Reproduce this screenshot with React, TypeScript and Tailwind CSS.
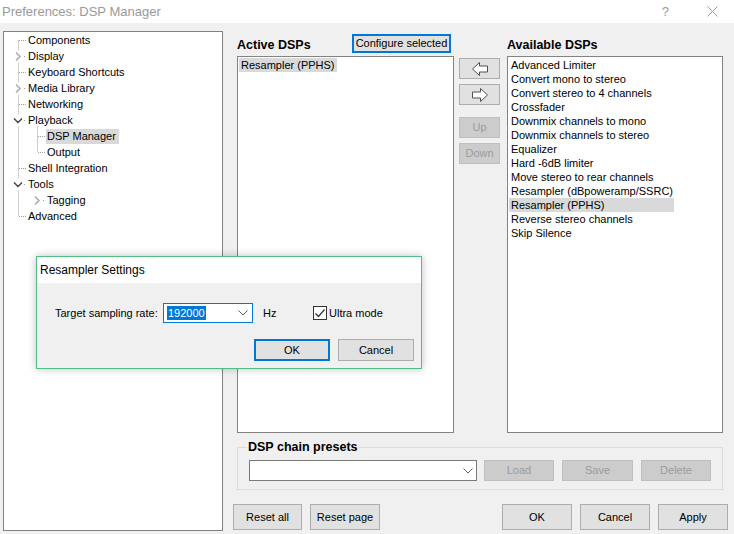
import React from "react";

const font = "font-['Liberation_Sans',Arial,sans-serif]";

const treeRows: { label: string; level: number; selected?: boolean }[] = [
  { label: "Components", level: 1 },
  { label: "Display", level: 1 },
  { label: "Keyboard Shortcuts", level: 1 },
  { label: "Media Library", level: 1 },
  { label: "Networking", level: 1 },
  { label: "Playback", level: 1 },
  { label: "DSP Manager", level: 2, selected: true },
  { label: "Output", level: 2 },
  { label: "Shell Integration", level: 1 },
  { label: "Tools", level: 1 },
  { label: "Tagging", level: 2 },
  { label: "Advanced", level: 1 },
];

const available = [
  "Advanced Limiter",
  "Convert mono to stereo",
  "Convert stereo to 4 channels",
  "Crossfader",
  "Downmix channels to mono",
  "Downmix channels to stereo",
  "Equalizer",
  "Hard -6dB limiter",
  "Move stereo to rear channels",
  "Resampler (dBpoweramp/SSRC)",
  "Resampler (PPHS)",
  "Reverse stereo channels",
  "Skip Silence",
];

// dotted connector lines + expanders for the tree
function TreeLines() {
  const cy = (i: number) => 8 + i * 16 + 0.5;
  const dots = (x1: number, x2: number, y: number) => (
    <line x1={x1} y1={y} x2={x2} y2={y} stroke="#a0a0a0" strokeDasharray="1 1" />
  );
  const collapsed = (x: number, y: number) => (
    <path d={`M${x} ${y - 4} L${x + 4} ${y} L${x} ${y + 4}`} fill="none" stroke="#a6a6a6" strokeWidth="1.4" />
  );
  const expanded = (x: number, y: number) => (
    <path d={`M${x - 4} ${y - 2} L${x} ${y + 2} L${x + 4} ${y - 2}`} fill="none" stroke="#404040" strokeWidth="1.4" />
  );
  return (
    <svg width="46" height="200" className="shrink-0">
      <line x1="14.5" y1={cy(0)} x2="14.5" y2={cy(11)} stroke="#a0a0a0" strokeDasharray="1 1" />
      {[0, 2, 4, 8, 11].map((i) => (
        <g key={i}>{dots(15, 22, cy(i))}</g>
      ))}
      {[1, 3].map((i) => (
        <g key={i}>
          <rect x="9" y={cy(i) - 6} width="10" height="12" fill="white" />
          {collapsed(12, cy(i))}
          {dots(20, 21, cy(i))}
        </g>
      ))}
      {[5, 9].map((i) => (
        <g key={i}>
          <rect x="8" y={cy(i) - 6} width="12" height="12" fill="white" />
          {expanded(14, cy(i))}
          {dots(20, 21, cy(i))}
        </g>
      ))}
      <line x1="33.5" y1={cy(5) + 6} x2="33.5" y2={cy(7)} stroke="#a0a0a0" strokeDasharray="1 1" />
      {dots(34, 41, cy(6))}
      {dots(34, 41, cy(7))}
      {collapsed(31, cy(10))}
      {dots(39, 40, cy(10))}
    </svg>
  );
}

function Btn({
  children,
  className = "",
  disabled,
  focused,
}: {
  children: React.ReactNode;
  className?: string;
  disabled?: boolean;
  focused?: boolean;
}) {
  const look = disabled
    ? "bg-[#cccccc] border border-[#bfbfbf] text-[#9b9b9b]"
    : focused
    ? "bg-[#e1e1e1] border-2 border-[#0078d7] text-black"
    : "bg-[#e1e1e1] border border-[#adadad] text-black";
  return <div className={`flex shrink-0 items-center justify-center ${look} ${className}`}>{children}</div>;
}

function Arrow({ dir }: { dir: "left" | "right" }) {
  const d =
    dir === "left"
      ? "M1.5 8 L8.5 1.5 L8.5 5 L16.5 5 L16.5 11 L8.5 11 L8.5 14.5 Z"
      : "M16.5 8 L9.5 1.5 L9.5 5 L1.5 5 L1.5 11 L9.5 11 L9.5 14.5 Z";
  return (
    <svg width="18" height="16">
      <path d={d} fill="white" stroke="#505050" strokeWidth="1" strokeLinejoin="miter" />
    </svg>
  );
}

function ComboChevron({ color = "#606060" }: { color?: string }) {
  return (
    <svg width="10" height="6">
      <path d="M0.5 0.5 L5 5 L9.5 0.5" fill="none" stroke={color} strokeWidth="1" />
    </svg>
  );
}

export default function App() {
  return (
    <div
      className={`relative w-[734px] h-[534px] overflow-hidden whitespace-nowrap bg-[#f0f0f0] text-[11px] text-black ${font}`}
    >
      {/* window title */}
      <div className="flex h-[23px] items-center bg-white">
        <span className="pl-[2px] text-[13px] text-[#9a9a9a]">Preferences: DSP Manager</span>
        <span className="ml-auto mr-[38px] text-[13px] text-[#9a9a9a]">?</span>
        <svg width="11" height="11" className="mr-[16px]">
          <path d="M0.5 0.5 L10.5 10.5 M10.5 0.5 L0.5 10.5" stroke="#9a9a9a" strokeWidth="1" />
        </svg>
      </div>

      <div className="flex pl-[3px] pt-[8px]">
        {/* tree */}
        <div className="flex h-[500px] w-[220px] shrink-0 border border-[#828282] bg-white">
          <TreeLines />
          <div className="ml-[-23px] flex flex-col">
            {treeRows.map((r) => (
              <div key={r.label} className={`flex h-[16px] items-center ${r.level === 2 ? "pl-[19px]" : ""}`}>
                <span className={`px-[1px] leading-[15px] ${r.selected ? "bg-[#d9d9d9] pr-[3px]" : ""}`}>{r.label}</span>
              </div>
            ))}
          </div>
        </div>

        {/* right side */}
        <div className="ml-[10px] flex w-[495px] flex-col">
          <div className="ml-[4px] flex">
            {/* active */}
            <div className="flex w-[217px] flex-col">
              <div className="flex h-[25px] items-start">
                <span className="mt-[5px] text-[12.5px] font-bold">Active DSPs</span>
                <Btn focused className="ml-auto mr-[3px] mt-[3px] h-[19px] w-[99px]">
                  Configure selected
                </Btn>
              </div>
              <div className="h-[377px] border border-[#828282] bg-white pl-[1px] pt-[1px]">
                <div className="flex h-[14px] w-[98px] items-center bg-[#d9d9d9] pl-[2px]">Resampler (PPHS)</div>
              </div>
            </div>
            {/* move buttons */}
            <div className="ml-[5px] flex w-[41px] flex-col pt-[27px]">
              <Btn className="h-[21px]">
                <Arrow dir="left" />
              </Btn>
              <Btn className="mt-[5px] h-[21px]">
                <Arrow dir="right" />
              </Btn>
              <Btn disabled className="mt-[12px] h-[21px]">
                Up
              </Btn>
              <Btn disabled className="mt-[5px] h-[21px]">
                Down
              </Btn>
            </div>
            {/* available */}
            <div className="ml-[7px] flex w-[216px] flex-col">
              <div className="flex h-[25px] items-start">
                <span className="mt-[5px] text-[12.5px] font-bold">Available DSPs</span>
              </div>
              <div className="h-[377px] border border-[#828282] bg-white pl-[1px] pt-[1px]">
                {available.map((a) => (
                  <div
                    key={a}
                    className={`flex h-[14px] w-[165px] items-center pl-[2px] ${a === "Resampler (PPHS)" ? "bg-[#d9d9d9]" : ""}`}
                  >
                    {a}
                  </div>
                ))}
              </div>
            </div>
          </div>

          {/* presets */}
          <fieldset className="ml-[4px] mt-[6px] w-[486px] border border-[#dcdcdc] px-[11px] pb-[8px]">
            <legend className="ml-[-2px] px-[1px] text-[12.5px] font-bold leading-[16px]">DSP chain presets</legend>
            <div className="mt-[5px] flex items-center">
              <div className="flex h-[21px] w-[228px] items-center justify-end border border-[#7a7a7a] bg-white pr-[3px]">
                <ComboChevron />
              </div>
              <Btn disabled className="ml-[7px] h-[21px] w-[70px]">
                Load
              </Btn>
              <Btn disabled className="ml-[8px] h-[21px] w-[71px]">
                Save
              </Btn>
              <Btn disabled className="ml-[8px] h-[21px] w-[70px]">
                Delete
              </Btn>
            </div>
          </fieldset>

          {/* bottom buttons */}
          <div className="mt-[14px] flex">
            <Btn className="h-[26px] w-[69px]">Reset all</Btn>
            <Btn className="ml-[8px] h-[26px] w-[70px]">Reset page</Btn>
            <Btn className="ml-auto h-[26px] w-[70px]">OK</Btn>
            <Btn className="ml-[8px] h-[26px] w-[70px]">Cancel</Btn>
            <Btn className="ml-[8px] h-[26px] w-[70px]">Apply</Btn>
          </div>
        </div>
      </div>

      {/* Resampler settings dialog */}
      <div className="absolute left-[36px] top-[256px] flex h-[113px] w-[386px] flex-col border border-[#4fbf86] bg-[#f0f0f0] shadow-[0_0_8px_rgba(0,0,0,0.25)]">
        <div className="flex h-[26px] items-center bg-white pl-[3px] text-[12px]">Resampler Settings</div>
        <div className="flex items-center pl-[18px] pt-[20px]">
          <span className="w-[108px]">Target sampling rate:</span>
          <div className="flex h-[20px] w-[90px] items-center border border-[#0078d7] bg-white pl-[3px] pr-[4px]">
            <span className="bg-[#0078d7] px-[1px] leading-[14px] text-white">192000</span>
            <span className="ml-auto">
              <ComboChevron />
            </span>
          </div>
          <span className="ml-[10px] w-[50px]">Hz</span>
          <div className="flex h-[14px] w-[14px] items-center justify-center border border-[#333333] bg-white">
            <svg width="10" height="9">
              <path d="M0.5 4.5 L3.5 7.5 L9.5 0.5" fill="none" stroke="#333333" strokeWidth="1.2" />
            </svg>
          </div>
          <span className="ml-[2px]">Ultra mode</span>
        </div>
        <div className="mt-[16px] flex justify-end pr-[7px]">
          <Btn focused className="h-[22px] w-[76px]">
            OK
          </Btn>
          <Btn className="ml-[8px] h-[22px] w-[76px]">Cancel</Btn>
        </div>
      </div>
    </div>
  );
}
